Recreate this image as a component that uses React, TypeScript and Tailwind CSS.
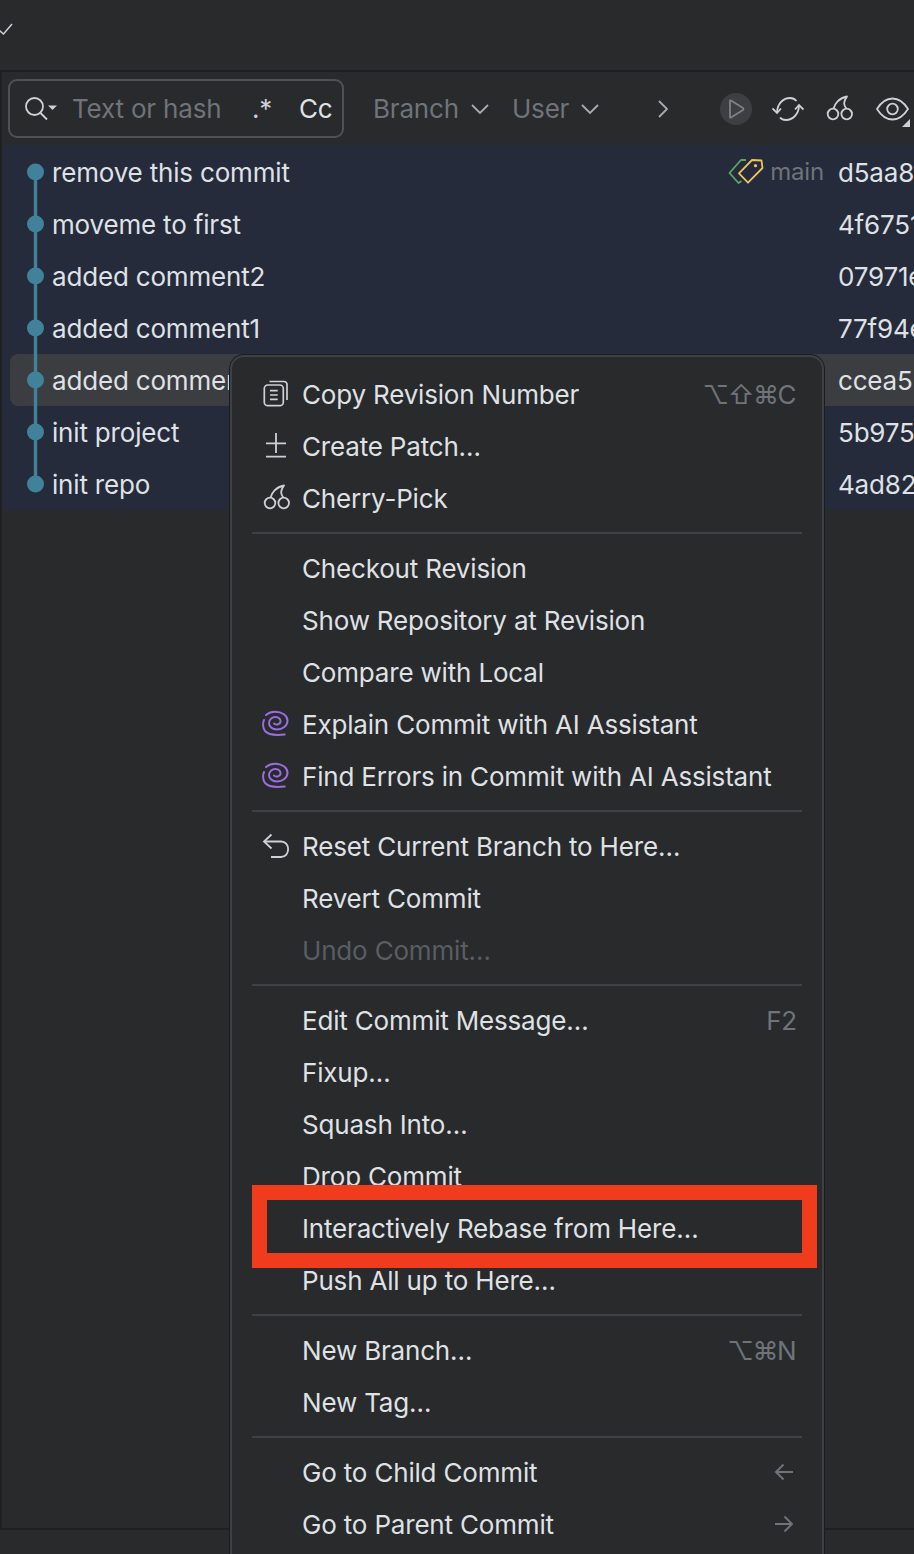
import React from "react";

const font = { fontFamily: "Inter, 'DejaVu Sans', sans-serif" };

const commits = [
  ["remove this commit", "d5aa8f1"],
  ["moveme to first", "4f67519"],
  ["added comment2", "07971e3"],
  ["added comment1", "77f94e2"],
  ["added comment", "ccea55b"],
  ["init project", "5b97573"],
  ["init repo", "4ad82c0"],
];

function Chevron({ className = "" }: { className?: string }) {
  return (
    <svg width="18" height="18" viewBox="0 0 18 18" fill="none" stroke="#a8abb0" strokeWidth="1.8" className={className}>
      <path d="M1 5 L9 13 L17 5" />
    </svg>
  );
}

function Cherry({ className = "" }: { className?: string }) {
  return (
    <svg width="28" height="28" viewBox="0 0 28 28" fill="none" stroke="#ced0d6" strokeWidth="1.8" strokeLinejoin="round" className={`overflow-visible ${className}`}>
      <circle cx="7" cy="19" r="5.3" />
      <circle cx="20.7" cy="19" r="5.3" />
      <path d="M7.5 13.7 C8.5 9 13 3 21 1.5 C17 7 17.5 10 20.5 13.7" />
    </svg>
  );
}

function Node({ first, last }: { first: boolean; last: boolean }) {
  return (
    <svg width="52" height="52" viewBox="0 0 52 52" className="shrink-0">
      <line x1="35.5" x2="35.5" y1={first ? 26 : 0} y2={last ? 26 : 52} stroke="#41829a" strokeWidth="3.4" />
      <circle cx="35.5" cy="26" r="8.5" fill="#41829a" />
    </svg>
  );
}

function Tags() {
  return (
    <svg width="36" height="28" viewBox="0 0 36 28" fill="none" strokeWidth="1.8" strokeLinejoin="round">
      <path d="M18 2 H13 L1.5 15 L10.5 25 L13.5 23" stroke="#5fa85e" />
      <path d="M11 15.3 L24 2 L33.5 2.5 L34.5 10 L20 24.7 Z" stroke="#edc35f" />
      <circle cx="27.5" cy="7.7" r="1.6" fill="#edc35f" stroke="none" />
    </svg>
  );
}

function Ai() {
  return (
    <svg width="26" height="26" viewBox="0 0 26 26" fill="none" stroke="#9a6ee0" strokeWidth="2" strokeLinecap="round" className="overflow-visible">
      <path d="M4 4 C7 1.5 10 0.8 13 0.8 C20 0.8 25.5 4.5 25.5 9.5 C25.5 15 20.5 18.5 15 18.5 C10 18.5 7 15.5 7 12 C7 8.5 10 6 13.5 6 C17 6 19 8.5 18.5 11 C18 13.5 13.5 14.5 12 12.5" />
      <path d="M2 9 C0.5 12 0.8 17 3 20 C6 23.5 14 24.5 22.7 23.5" />
    </svg>
  );
}

function Copy() {
  return (
    <svg width="26" height="26" viewBox="0 0 26 26" fill="none" stroke="#ced0d6" strokeWidth="1.7" className="overflow-visible">
      <rect x="2.3" y="4" width="19" height="20.7" rx="3.5" />
      <path d="M7.5 0.5 H22 a3 3 0 0 1 3 3 V19" />
      <path d="M8 9.7 H15.7 M8 14 H15.7 M8 18.3 H15.7" />
    </svg>
  );
}

function Patch() {
  return (
    <svg width="26" height="26" viewBox="0 0 26 26" fill="none" stroke="#ced0d6" strokeWidth="1.8" className="overflow-visible">
      <path d="M14 0 V20 M4 10.3 H24 M4 23.7 H24" />
    </svg>
  );
}

function Reset() {
  return (
    <svg width="28" height="26" viewBox="0 0 28 26" fill="none" stroke="#ced0d6" strokeWidth="1.8">
      <path d="M9.5 1.5 L2 8.5 L9.5 15.5" />
      <path d="M2 8.5 H19 C28.5 8.5 28.5 24 19 24 H9" />
    </svg>
  );
}

function Arrow({ dir }: { dir: "left" | "right" }) {
  return (
    <svg width="20" height="18" viewBox="0 0 20 18" fill="none" stroke="#6f737a" strokeWidth="1.9" className="mr-[3px]">
      {dir === "left" ? <path d="M19 9 H2 M9.5 1.5 L2 9 L9.5 16.5" /> : <path d="M1 9 H18 M10.5 1.5 L18 9 L10.5 16.5" />}
    </svg>
  );
}

type Item = { label: string; icon?: React.ReactNode; hint?: React.ReactNode; tight?: boolean; disabled?: boolean };

const groups: Item[][] = [
  [
    { label: "Copy Revision Number", icon: <Copy />, hint: "⌥⇧⌘C", tight: true },
    { label: "Create Patch…", icon: <Patch /> },
    { label: "Cherry-Pick", icon: <Cherry className="ml-px" /> },
  ],
  [
    { label: "Checkout Revision" },
    { label: "Show Repository at Revision" },
    { label: "Compare with Local" },
    { label: "Explain Commit with AI Assistant", icon: <Ai /> },
    { label: "Find Errors in Commit with AI Assistant", icon: <Ai /> },
  ],
  [
    { label: "Reset Current Branch to Here…", icon: <Reset /> },
    { label: "Revert Commit" },
    { label: "Undo Commit…", disabled: true },
  ],
  [
    { label: "Edit Commit Message…", hint: "F2" },
    { label: "Fixup…" },
    { label: "Squash Into…" },
    { label: "Drop Commit" },
    { label: "Interactively Rebase from Here…" },
    { label: "Push All up to Here…" },
  ],
  [
    { label: "New Branch…", hint: "⌥⌘N", tight: true },
    { label: "New Tag…" },
  ],
  [
    { label: "Go to Child Commit", hint: <Arrow dir="left" /> },
    { label: "Go to Parent Commit", hint: <Arrow dir="right" /> },
  ],
];

export default function App() {
  return (
    <div className="relative h-[1554px] w-[914px] overflow-hidden bg-[#292a2c] flex flex-col text-[26px] tracking-[-0.18px] text-[#dfe1e5]" style={font}>
      <header className="h-[70px] shrink-0 flex items-center">
        <svg width="14" height="14" viewBox="0 0 14 14" fill="none" stroke="#ced0d6" strokeWidth="1.5" className="-mt-[12px]">
          <path d="M-1 8 L3.5 12 L12 2" />
        </svg>
      </header>
      <div className="flex-1 flex flex-col border-t-2 border-b-2 border-l-2 border-t-[#1e1f22] border-b-[#1f2022] border-l-[#1f2022] min-h-0">
        <div className="h-[73px] shrink-0 flex items-center pl-[6px] text-[#6f737a]">
          <div className="w-[336px] h-[59px] rounded-[9px] border-2 border-[#4e5157] flex items-center pl-[14px] shrink-0">
            <svg width="34" height="26" viewBox="0 0 34 26" fill="none" stroke="#ced0d6" strokeWidth="1.8" className="shrink-0">
              <circle cx="10.5" cy="10.5" r="8.5" />
              <path d="M16.5 17 L23 23.5" />
              <path d="M24 9.5 H33 L28.5 14 Z" fill="#ced0d6" stroke="none" />
            </svg>
            <span className="ml-[14px] w-[180px] shrink-0 whitespace-nowrap">Text or hash</span>
            <span className="text-[#ced0d6] w-[47px] shrink-0 whitespace-nowrap">.*</span>
            <span className="text-[#dfe1e5] whitespace-nowrap">Cc</span>
          </div>
          <span className="ml-[29px]">Branch</span>
          <Chevron className="ml-[12px]" />
          <span className="ml-[23px]">User</span>
          <Chevron className="ml-[12px]" />
          <svg width="12" height="20" viewBox="0 0 12 20" fill="none" stroke="#a8abb0" strokeWidth="1.8" className="ml-[58px]">
            <path d="M2 2 L10 10 L2 18" />
          </svg>
          <div className="ml-[51px] w-[32px] h-[32px] rounded-full bg-[#3d3f43] flex items-center justify-center shrink-0">
            <svg width="20" height="22" viewBox="0 0 20 22" fill="none" stroke="#7d8087" strokeWidth="1.8" strokeLinejoin="round">
              <path d="M4 3 V19 Q4 20 5 19.5 L17 12 Q18 11 17 10 L5 2.5 Q4 2 4 3 Z" />
            </svg>
          </div>
          <svg width="32" height="28" viewBox="0 0 32 28" fill="none" stroke="#ced0d6" strokeWidth="1.8" className="ml-[20px] shrink-0">
            <path d="M5 18 C5 8 12 3 18 3 C20.5 3 22.5 3.5 24.5 6" />
            <path d="M27 10 C27 20 20 25 14 25 C11.5 25 9.5 24.5 8 22.5" />
            <path d="M0.5 13.5 L5 18 L9 13.5" />
            <path d="M23 14.5 L27 10 L31.5 14.5" />
          </svg>
          <Cherry className="ml-[22px] shrink-0" />
          <div className="relative ml-[22px] w-[34px] h-[28px] shrink-0">
            <svg width="34" height="28" viewBox="0 0 34 28" fill="none" stroke="#ced0d6" strokeWidth="1.8">
              <path d="M1 14 C6 6 11 3.5 16.5 3.5 C22 3.5 27 6 32 14 C27 22 22 24.5 16.5 24.5 C11 24.5 6 22 1 14 Z" />
              <circle cx="16.5" cy="14" r="5.3" />
            </svg>
            <div className="absolute left-[26px] top-[24px] w-0 h-0 border-l-[8px] border-b-[8px] border-l-transparent border-b-[#ced0d6]" />
          </div>
        </div>
        <div className="shrink-0 bg-[#252b3b] pt-px">
          {commits.map(([msg, hash], i) => (
            <div
              key={hash}
              className={
                i === 4
                  ? "h-[52px] flex items-center overflow-hidden ml-[8px] bg-[#3b3d40] rounded-l-[8px]"
                  : "h-[52px] flex items-center overflow-hidden -ml-[2px]"
              }
            >
              <div className={i === 4 ? "-ml-[10px]" : ""}>
                <Node first={i === 0} last={i === commits.length - 1} />
              </div>
              <span className="whitespace-nowrap w-[786px] shrink-0 flex items-center justify-between pr-[14px]">
                {msg}
                {i === 0 && (
                  <span className="flex items-center gap-[6px] text-[24px] text-[#6f737a]">
                    <Tags />
                    main
                  </span>
                )}
              </span>
              <span className="whitespace-nowrap">{hash}</span>
            </div>
          ))}
        </div>
      </div>
      <footer className="h-[24px] shrink-0" />

      <div className="absolute left-[230px] top-[355px] w-[594px] h-[1230px] rounded-[14px] bg-[#292a2c] border-2 border-[#3e4044] shadow-[0_0_0_1px_#1b1c1e] pt-[11px] px-[20px]">
        {groups.map((group, g) => (
          <div key={g}>
            {g > 0 && (
              <div className="h-[18px] flex items-center">
                <div className="h-[2px] w-full bg-[#404246]" />
              </div>
            )}
            {group.map((item) => (
              <div key={item.label} className="h-[52px] flex items-center">
                <span className="w-[50px] shrink-0 flex items-center pl-[10px]">{item.icon}</span>
                <span className={`flex-1 whitespace-nowrap ${item.disabled ? "text-[#5a5d63]" : "text-[#dfe1e5]"}`}>{item.label}</span>
                {item.hint && (
                  <span className={item.tight ? "text-[#6f737a] pr-[7px] whitespace-nowrap flex items-center tracking-[-1.5px]" : "text-[#6f737a] pr-[5px] whitespace-nowrap flex items-center"}>
                    {item.hint}
                  </span>
                )}
              </div>
            ))}
          </div>
        ))}
      </div>

      <div className="absolute left-[252px] top-[1185px] w-[565px] h-[83px] border-[15px] border-[#f03b1d]" />
    </div>
  );
}
